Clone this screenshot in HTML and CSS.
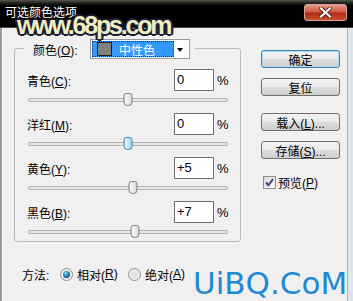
FILE: index.html
```html
<!DOCTYPE html>
<html lang="zh-CN">
<head>
    <meta charset="UTF-8">
    <title>可选颜色选项</title>
    <link rel="stylesheet" href="styles.css">
</head>
<body>
    <div class="window">
        <header class="titlebar">
            <span class="title">可选颜色选项</span>
            <button class="close-btn">
                <svg width="13" height="11" viewBox="0 0 13 11">
                    <path d="M2 1.5l9 8M11 1.5l-9 8" stroke="#5a1a10" stroke-width="4" stroke-linecap="square"/>
                    <path d="M2 1.5l9 8M11 1.5l-9 8" stroke="#fff" stroke-width="2.2" stroke-linecap="square"/>
                </svg>
            </button>
        </header>

        <div class="frame">
            <div class="main">
                <fieldset class="group">
                    <legend class="group-legend">
                        <span class="legend-label">颜色(<u>O</u>):</span>
                        <div class="dropdown">
                            <span class="dropdown-value"><span class="swatch"></span>中性色</span>
                            <span class="dropdown-arrow"></span>
                        </div>
                    </legend>

                    <div class="row">
                        <div class="row-top">
                            <span class="row-label">青色(<u>C</u>):</span>
                            <span class="value-box">0</span>
                            <span class="unit">%</span>
                        </div>
                        <div class="slider">
                            <div class="track"><span class="thumb" style="left: 50%"></span></div>
                        </div>
                    </div>

                    <div class="row">
                        <div class="row-top">
                            <span class="row-label">洋红(<u>M</u>):</span>
                            <span class="value-box">0</span>
                            <span class="unit">%</span>
                        </div>
                        <div class="slider">
                            <div class="track"><span class="thumb active" style="left: 50%"></span></div>
                        </div>
                    </div>

                    <div class="row">
                        <div class="row-top">
                            <span class="row-label">黄色(<u>Y</u>):</span>
                            <span class="value-box">+5</span>
                            <span class="unit">%</span>
                        </div>
                        <div class="slider">
                            <div class="track"><span class="thumb" style="left: 52.5%"></span></div>
                        </div>
                    </div>

                    <div class="row">
                        <div class="row-top">
                            <span class="row-label">黑色(<u>B</u>):</span>
                            <span class="value-box">+7</span>
                            <span class="unit">%</span>
                        </div>
                        <div class="slider">
                            <div class="track"><span class="thumb" style="left: 53.5%"></span></div>
                        </div>
                    </div>
                </fieldset>

                <div class="method">
                    <span class="method-label">方法:</span>
                    <span class="option"><span class="radio checked"></span>相对(<u>R</u>)</span>
                    <span class="option"><span class="radio"></span>绝对(<u>A</u>)</span>
                </div>
            </div>

            <div class="side">
                <button class="btn default">确定</button>
                <button class="btn">复位</button>
                <button class="btn gap">载入(<u>L</u>)...</button>
                <button class="btn">存储(<u>S</u>)...</button>
                <div class="preview">
                    <span class="checkbox">
                        <svg width="11" height="11" viewBox="0 0 11 11">
                            <path d="M2 5.5l2.5 2.7L9 2.2" fill="none" stroke="#3b4a7c" stroke-width="2"/>
                        </svg>
                    </span>
                    预览(<u>P</u>)
                </div>
            </div>
        </div>

        <!-- watermarks over the screenshot -->
        <div class="mark-top">www.68ps.com</div>
        <div class="mark-bottom">UiBQ.CoM</div>
    </div>
</body>
</html>
```

FILE: styles.css
```css
* {
    margin: 0;
    padding: 0;
    box-sizing: border-box;
}

body {
    width: 353px;
    height: 301px;
    overflow: hidden;
    background-color: #000;
    color: #000;
    font-family: "Liberation Sans", "Noto Sans CJK SC", sans-serif;
    font-size: 12px;
}

.window {
    position: relative;
    height: 301px;
    display: flex;
    flex-direction: column;
}

/* Title bar */
.titlebar {
    height: 28px;
    display: flex;
    justify-content: space-between;
    align-items: flex-start;
    padding: 0 6px 0 5px;
    background: linear-gradient(#55574c 0, #222220 3px, #000 6px);
    border-bottom: 1px solid #4a4a4a;
}

.title {
    margin-top: 6px;
    color: #fff;
    line-height: 14px;
    font-size: 12px;
}

.close-btn {
    margin-top: 4px;
    width: 43px;
    height: 17px;
    display: flex;
    align-items: center;
    justify-content: center;
    border: 1px solid #d7a09a;
    border-radius: 3px;
    background: linear-gradient(#e59a88 0%, #cf5a40 45%, #b22c14 55%, #c8502f 100%);
}

/* Dialog body */
.frame {
    flex: 1;
    display: flex;
    background-color: #f0f0f0;
    border-left: 2px solid #9b9b9b;
    border-right: 5px solid #dfe7ee;
    padding-left: 1px;
    box-shadow: inset 1px 0 0 #fff, inset -1px 0 0 #9fb6ca;
}

.main {
    width: 238px;
    padding: 9px 0 0 11px;
}

.group {
    width: 227px;
    border: 1px solid #b9b9b9;
    border-radius: 3px;
    padding: 10px 11px 1px 12px;
    min-inline-size: 0;
}

.group-legend {
    display: flex;
    align-items: center;
    margin-left: -3px;
    padding: 2px 5px 0 9px;
}

.legend-label {
    width: 57px;
}

.dropdown {
    width: 100px;
    height: 20px;
    display: flex;
    align-items: center;
    padding: 1px;
    background-color: #fff;
    border: 1px solid #9a9a9a;
}

.dropdown-value {
    width: 82px;
    height: 16px;
    display: flex;
    align-items: center;
    background-color: #3399ff;
    border: 1px dotted #0c3a70;
    color: #fff;
}

.swatch {
    width: 15px;
    height: 14px;
    margin: 0 7px 0 4px;
    background-color: #808080;
    border: 1px solid #1e1e1e;
}

.dropdown-arrow {
    margin: 1px 5px 0 auto;
    border-top: 4px solid #000;
    border-left: 3.5px solid transparent;
    border-right: 3.5px solid transparent;
}

.row {
    margin-bottom: 5px;
}

.row:last-child {
    margin-bottom: 0;
}

.row-top {
    height: 22px;
    display: flex;
    align-items: center;
}

.row-label {
    flex: 1;
}

.value-box {
    width: 40px;
    height: 22px;
    padding-left: 2px;
    line-height: 20px;
    font-size: 13px;
    background-color: #fff;
    border: 1px solid #6e6e6e;
}

.unit {
    width: 12px;
    margin-left: 3px;
    font-size: 13px;
}

.slider {
    height: 17px;
    padding-top: 7px;
}

.track {
    position: relative;
    height: 4px;
    margin: 0 1px;
    background-color: #e7e7e7;
    border: 1px solid #b4b4b4;
    border-radius: 2px;
}

.thumb {
    position: absolute;
    top: -6px;
    width: 9px;
    height: 13px;
    transform: translateX(-50%);
    border: 1px solid #7c7c7c;
    border-radius: 3px 3px 4px 4px;
    background: linear-gradient(90deg, #fbfbfb, #dcdcdc);
}

.thumb.active {
    border-color: #3c7fb1;
    background: linear-gradient(90deg, #eaf6fd, #a7d8f3);
}

.method {
    display: flex;
    align-items: center;
    height: 16px;
    margin-top: 24px;
    padding-left: 8px;
}

.method-label {
    width: 38px;
}

.option {
    width: 68px;
    display: flex;
    align-items: center;
}

.radio {
    position: relative;
    width: 13px;
    height: 13px;
    margin-right: 4px;
    border-radius: 50%;
    border: 1px solid #8e8f8f;
    background: radial-gradient(circle at 50% 50%, #e4e4e4 40%, #f9f9f9 100%);
}

.radio.checked::after {
    content: "";
    position: absolute;
    left: 2px;
    top: 2px;
    width: 7px;
    height: 7px;
    border-radius: 50%;
    background: radial-gradient(circle at 40% 35%, #8fe3fb 0, #2b7fa6 45%, #0e3f57 100%);
}

/* Right column */
.side {
    width: 79px;
    margin-left: 20px;
    padding-top: 22px;
    display: flex;
    flex-direction: column;
}

.btn {
    height: 18px;
    margin-bottom: 10px;
    font-family: "Liberation Sans", "Noto Sans CJK SC", sans-serif;
    font-size: 12px;
    color: #000;
    border: 1px solid #707070;
    border-radius: 3px;
    background: linear-gradient(#f2f2f2 0%, #ebebeb 50%, #dddddd 51%, #cfcfcf 100%);
}

.btn.default {
    border-color: #3c7fb1;
    box-shadow: inset 0 0 0 1px #a8dff7;
}

.btn.gap {
    margin-top: 7px;
}

.preview {
    display: flex;
    align-items: center;
    margin: 5px 0 0 2px;
}

.checkbox {
    width: 13px;
    height: 13px;
    margin-right: 2px;
    display: flex;
    align-items: center;
    justify-content: center;
    border: 1px solid #8e8f8f;
    background: linear-gradient(135deg, #dcdcdc, #fbfbfb);
}

/* Watermarks */
.mark-top {
    position: absolute;
    left: 17px;
    top: 13px;
    font-size: 25px;
    line-height: 25px;
    font-weight: bold;
    letter-spacing: -2.2px;
    color: #eeeec6;
    text-shadow:
        2px 0 #1c1c2e, -2px 0 #1c1c2e, 0 2px #1c1c2e, 0 -2px #1c1c2e,
        1px 1px #1c1c2e, -1px -1px #1c1c2e, 1px -1px #1c1c2e, -1px 1px #1c1c2e,
        2px 1px #1c1c2e, -2px 1px #1c1c2e, 2px -1px #1c1c2e, -2px -1px #1c1c2e;
}

.mark-bottom {
    position: absolute;
    left: 193px;
    top: 268px;
    font-family: "DejaVu Sans", sans-serif;
    font-size: 31px;
    line-height: 30px;
    color: #1f8ad4;
}
```
